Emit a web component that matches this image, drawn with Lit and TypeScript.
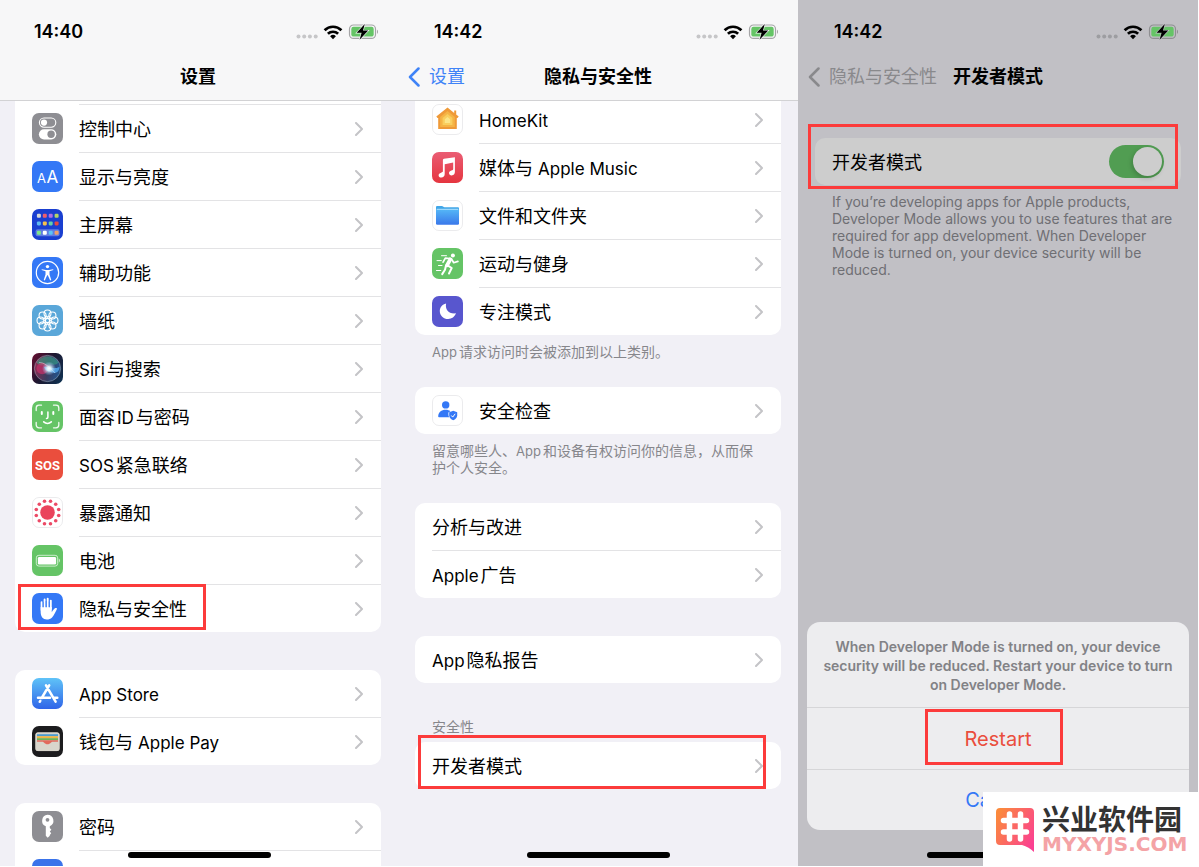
import { LitElement, html, svg, css, nothing, TemplateResult } from "lit";
import { customElement, property } from "lit/decorators.js";

const ring = (n: number, radius: number, offset = 0) =>
  Array.from({ length: n }, (_, i) => {
    const a = ((i + offset) / n) * Math.PI * 2;
    return [15.5 + Math.cos(a) * radius, 15.5 + Math.sin(a) * radius];
  });

const homeDots = [
  ["#d5d8d8", "#ee5d6c", "#b06ee8", "#b4d667"],
  ["#5fb8f0", "#f5c04b", "#63d0a8", "#e5493f"],
  ["#7ee58b", "#ffffff", "#5cc4f5", "#f2a06a"],
];

const tile = (fill: string) => svg`<rect width="31" height="31" rx="7" fill=${fill}/>`;
const whiteTile = svg`<rect x=".5" y=".5" width="30" height="30" rx="6.5" fill="#fff" stroke="#e6e6e8" stroke-width=".8"/>`;

const icons: Record<string, TemplateResult> = {
  control: svg`${tile("#8e8e93")}
    <rect x="7.4" y="5" width="16.4" height="9.2" rx="4.6" fill="none" stroke="#fff" stroke-width="1.1"/>
    <circle cx="12" cy="9.6" r="3.1" fill="#fff"/>
    <rect x="6.9" y="16.2" width="17.4" height="10.2" rx="5.1" fill="#fff"/>
    <circle cx="19.1" cy="21.3" r="3.7" fill="#8e8e93"/>`,
  display: svg`${tile("#3478f6")}
    <text x="5" y="22" font-size="13" fill="#fff">A</text>
    <text x="14.6" y="22" font-size="17" fill="#fff">A</text>`,
  home: svg`${tile("#1a3fd0")}
    <rect x="3.6" y="20.3" width="24" height="7" rx="2" fill="#8fa6ee" opacity=".6"/>
    ${homeDots.map((row, r) => row.map((c, i) =>
      svg`<rect x=${4.9 + i * 5.9} y=${[4.8, 12.4, 21.8][r]} width="4" height="4" rx="1.1" fill=${c}/>`))}`,
  access: svg`${tile("#3478f6")}
    <circle cx="15.5" cy="15.5" r="11.2" fill="none" stroke="#fff" stroke-width="1.2"/>
    <circle cx="15.5" cy="9.6" r="1.7" fill="#fff"/>
    <path d="M9.8 12.2l4.2.8h3l4.2-.8.2.9-3.9 1.2v3.2l1.8 5.5-1.1.4-2.4-5.2h-.6l-2.4 5.2-1.1-.4 1.8-5.5v-3.2l-3.9-1.2z" fill="#fff"/>`,
  wallpaper: svg`${tile("#5aa7d9")}
    <g fill="none" stroke="#fff" stroke-width="1.1">
      ${ring(8, 7).map(([x, y]) => svg`<circle cx=${x} cy=${y} r="3.5"/>`)}
      ${ring(8, 3.5, 0.5).map(([x, y]) => svg`<circle cx=${x} cy=${y} r="1.3" stroke-width=".7"/>`)}
      <circle cx="15.5" cy="15.5" r="2.1"/></g>`,
  siri: svg`<defs>
      <linearGradient id="s1" x1="0" y1=".2" x2="1" y2=".8"><stop offset="0" stop-color="#5d1030"/><stop offset=".45" stop-color="#1d1730"/><stop offset="1" stop-color="#10304f"/></linearGradient>
      <linearGradient id="s2" x1="0" y1=".4" x2="1" y2=".5"><stop offset="0" stop-color="#e0487b"/><stop offset=".5" stop-color="#5b5c86"/><stop offset="1" stop-color="#2f83d8"/></linearGradient>
      <radialGradient id="s3"><stop offset="0" stop-color="#fff"/><stop offset=".3" stop-color="#eff" stop-opacity=".85"/><stop offset="1" stop-color="#9cf" stop-opacity="0"/></radialGradient></defs>
    ${tile("url(#s1)")}
    <circle cx="15.5" cy="15.5" r="13" fill="url(#s2)" opacity=".5"/>
    <path d="M4.5 9.5a12.8 12.8 0 0 1 22 0c-3 4-7 1-11 2s-8 2-11-2z" fill="#36a184" opacity=".6"/>
    <circle cx="15.5" cy="15.5" r="13.1" fill="none" stroke="#a8b8c8" stroke-width=".7" opacity=".7"/>
    <circle cx="10.300" cy="15.500" r="5.800" fill="#d8306a" opacity=".6"/>
    <path d="M12 14c5-1 8 3 15.500 0 0 5-4 7-7.500 5.500S14 19 12 14z" fill="#52aaf0" opacity=".8"/>
    <path d="M7 9.500c5 0 9 3 16 10.500" stroke="#fff" stroke-width="1" opacity=".4" fill="none"/>
    <ellipse cx="17" cy="15.500" rx="7" ry="7" fill="url(#s3)"/>`,
  face: svg`${tile("#65c466")}
    <g fill="none" stroke="#fff" stroke-linecap="round">
      <path d="M4.200 9.500V7a2.800 2.800 0 0 1 2.800-2.800h2.500M21.500 4.200H24A2.800 2.800 0 0 1 26.800 7v2.500M26.800 21.500V24a2.800 2.800 0 0 1-2.800 2.800h-2.500M9.500 26.800H7A2.800 2.800 0 0 1 4.200 24v-2.500" stroke-width="1.300" opacity=".9"/>
      <path d="M9.800 11v2M21.300 11v2" stroke-width="2"/>
      <path d="M15.900 11v5.200c0 .8-.4 1.200-1.400 1.200" stroke-width="1.500"/>
      <path d="M11.700 20.900c2.200 2 5.400 2 7.600 0" stroke-width="1.600"/></g>`,
  sos: svg`${tile("#ea4e3d")}
    <text x="15.500" y="20.500" font-size="13" font-weight="700" text-anchor="middle" fill="#fff" class="cond">SOS</text>`,
  exposure: svg`${whiteTile}
    <circle cx="15.500" cy="15.500" r="7.300" fill="#ea435c"/>
    ${ring(12, 11.600, 0.5).map(([x, y]) => svg`<circle cx=${x} cy=${y} r="1.800" fill="#ec4a66"/>`)}`,
  battery: svg`${tile("#65c466")}
    <rect x="4.300" y="10.300" width="21.400" height="10.800" rx="2.600" fill="none" stroke="#d8f2d8" stroke-width=".9"/>
    <rect x="5.900" y="11.900" width="18.200" height="7.600" rx="1.300" fill="#fff"/>
    <path d="M26.800 13.600c1.400.7 1.400 3.500 0 4.200z" fill="#d8f2d8"/>`,
  hand: svg`${tile("#3478f6")}
    <g fill="none" stroke="#fff" stroke-linecap="round" stroke-width="1.900">
      <path d="M9.600 17V9.200M12.600 15V6.400M15.700 15V5.600M18.800 16V7.600"/></g>
    <path d="M8.650 14h11.100v5.200c1.200-1.700 2.200-3.200 3.500-4.100.8-.5 2 0 1.700.9-1.400 3.200-3 6.300-4.900 8.500-1.500 1.600-3.200 2-5.200 2-4 0-6.200-3-6.200-7.500z" fill="#fff"/>
    <path d="M11.100 9v5.500M14.150 8v6.500M17.250 8.500v6" stroke="#3478f6" stroke-width=".7"/>`,
  appstore: svg`<defs><linearGradient id="a1" x2="0" y2="1"><stop stop-color="#5fc3f8"/><stop offset="1" stop-color="#3065e8"/></linearGradient></defs>
    ${tile("url(#a1)")}
    <g stroke="#fff" stroke-width="2.500" stroke-linecap="round" fill="none">
      <path d="M17.200 7.300L9.700 20M14 7.300l9.600 16.300M6 19.700h12M22.500 19.700h2.800M8.300 22.800l-.6 1"/></g>`,
  wallet: svg`${tile("#1c1c1e")}
    <rect x="3.500" y="6.500" width="24" height="18.500" rx="2" fill="#d9d6cc"/>
    <path d="M5 8.200h21v2H5z" fill="#4a9bd0"/><path d="M5 10.200h21v2H5z" fill="#f0b440"/>
    <path d="M5 12.200h21v2H5z" fill="#6bb458"/><path d="M5 14.200h21v1.600h-5.500c-1.500 0-2 2.500-5 2.500s-3.500-2.500-5-2.500H5z" fill="#e2695c"/>
    <rect x="3.900" y="6.900" width="23.200" height="17.700" rx="2" fill="none" stroke="#d9d6cc" stroke-width=".9"/>`,
  key: svg`${tile("#8e8e93")}
    <path fill-rule="evenodd" d="M15.500 3.800a6 6 0 0 1 2.300 11.500v1.700l1.600 1.700-1.600 1.800 1.400 1.800-1.400 1.600v.9l-2.100 2-1.900-2v-9.500A6 6 0 0 1 15.500 3.800zm0 3.100a1.900 1.900 0 1 0 0 3.800 1.900 1.900 0 0 0 0-3.800z" fill="#fff"/>`,
  blue: tile("#3a73ea"),
  homekit: svg`${whiteTile}
    <path d="M15.500 3.500L4.300 12.600l1.200 1.300h.7V25h18.600V13.900h.7l1.200-1.300-2.500-2.100V6.500h-2v2.400z" fill="#ef9a38"/>
    <path d="M15.500 7L8.200 13v10h14.600V13z" fill="#f5b445"/>
    <path d="M15.500 10L10.600 14v7h9.800v-7z" fill="#f9ce5e"/>
    <path d="M15.500 13l-2.700 2.200V19h5.400v-3.800z" fill="#fce588"/>`,
  music: svg`<defs><linearGradient id="m1" x2="0" y2="1"><stop stop-color="#ea5d74"/><stop offset="1" stop-color="#e5353f"/></linearGradient></defs>
    ${tile("url(#m1)")}
    <path d="M22.900 5.200v14.900c0 2-1.300 3.300-3.200 3.300-1.600 0-2.700-.9-2.700-2.300 0-1.300.9-2.200 2.400-2.600 1.300-.3 1.800-.5 1.800-1.500v-6.500l-8.500 1.800v9.700c0 2.200-1.300 3.600-3.400 3.600-1.600 0-2.700-.9-2.700-2.300 0-1.300.9-2.200 2.500-2.600 1.200-.3 1.800-.6 1.800-1.600V8c0-.7.3-1.100 1-1.200z" fill="#fff"/>`,
  files: svg`<defs><linearGradient id="f1" x2="0" y2="1"><stop stop-color="#55b8f7"/><stop offset="1" stop-color="#3a78ea"/></linearGradient></defs>
    ${whiteTile}
    <path d="M4 7.300c0-.8.5-1.300 1.300-1.300h4.500c1.200 0 1.500 1.200 2.700 1.200h13.200c.8 0 1.300.5 1.300 1.300v3H4z" fill="#41a6e8"/>
    <rect x="4" y="9" width="23" height="15.700" rx="1.300" fill="url(#f1)"/><path d="M4.800 9.300h21.400" stroke="#c9ecff" stroke-width=".8"/>`,
  fitness: svg`${tile("#65c466")}
    <g stroke="#fff" fill="none" stroke-linecap="round" stroke-linejoin="round">
      <circle cx="20.900" cy="7.500" r="2" fill="#fff" stroke="none"/>
      <path d="M18.300 11.300l-3.300 6" stroke-width="3.800"/>
      <path d="M17.800 10.500l-4.500-.3-2.200 4M19.500 11l2.200 3.700 4.200-1.300" stroke-width="1.700"/>
      <path d="M15.500 17.300l4.200 2.700-2.700 5.500M14 17.500l-1 4.300-2.800 4.300" stroke-width="2"/>
      <path d="M9.500 7.700h5M5 12.600h4.300M6.500 17.500h3.500M4.500 22.500h4.300" stroke-width="1"/></g>`,
  focus: svg`${tile("#5856ce")}
    <path d="M14.100 7.400c-1.200 5.500 2.300 10.800 9.800 9.900-1.100 3.500-4.100 5.700-7.700 5.700-4.700 0-8.400-3.600-8.400-8.100 0-3.600 2.500-6.700 6.300-7.500z" fill="#fff"/>`,
  safety: svg`${whiteTile}
    <circle cx="13.700" cy="9.900" r="3.700" fill="#3478f6"/>
    <path d="M6.200 21.500c0-4 3.200-6.700 7.500-6.700 2 0 3.500.5 4.700 1.500l-2 1.300c0 2.300 0 3.200.8 4.700H7c-.5 0-.8-.3-.8-.8z" fill="#3478f6"/>
    <path d="M21.200 15.800l4 1.500v3c0 2.500-1.700 4-4 5-2.300-1-4-2.500-4-5v-3z" fill="#3478f6"/>
    <path d="M19.300 20.500l1.400 1.600 2.500-3.300" fill="none" stroke="#fff" stroke-width="1"/>`,
};

const icon = (name: string) =>
  html`<svg class="icon" viewBox="0 0 31 31" aria-hidden="true">${icons[name]}</svg>`;

/* Latin runs are set one step smaller than the Han characters around them, with a thin gap where they touch. */
const mixed = (text: string) =>
  text.split(/([A-Za-z][A-Za-z ]*[A-Za-z])/).filter(Boolean).map((part, i, all) => {
    if (!/^[A-Za-z]/.test(part)) return html`<span>${part}</span>`;
    const before = i > 0 && !/[ 、]$/.test(all[i - 1]);
    const after = i < all.length - 1;
    return html`<span class="latin ${before ? "before" : ""} ${after ? "after" : ""}">${part}</span>`;
  });

const chevron = html`<svg class="chevron" viewBox="0 0 8 14" aria-hidden="true">
  <path d="M1 1l6 6-6 6" fill="none" stroke="#c4c4c7" stroke-width="2" stroke-linecap="round" stroke-linejoin="round"/></svg>`;

const shared = css`
  * { box-sizing: border-box; }
  .latin { font-size: 17px; line-height: 1; }
  .latin.before { margin-left: 2px; }
  .latin.after { margin-right: 2px; }
  .card { background: #fff; border-radius: 10px; }
  .card.continued { border-radius: 0 0 10px 10px; }
  .row {
    position: relative; display: flex; align-items: center; height: 47px;
    padding: 0 18px 0 17px; color: #000; text-decoration: none; font-size: 18px; line-height: 24px; white-space: nowrap;
  }
  .label { flex: 1; padding-top: 2px; }
  .icon { width: 31px; height: 31px; margin-right: 16px; flex: none; }
  .icon text { font-family: Inter, "Liberation Sans", sans-serif; }
  .icon .cond { font-family: Roboto, "Liberation Sans", sans-serif; }
  .chevron { width: 8px; height: 14px; flex: none; }
  .divider { height: 1px; margin-left: 17px; background: #e3e3e5; }
  .divider.inset { margin-left: 64px; }
  .note { margin: 8px 0 27px; padding: 0 17px; font-size: 14px; line-height: 17px; color: #86868b; }
  .note .latin { font-size: 13px; }
  .mark { position: absolute; border: 3px solid #fc3b3b; pointer-events: none; }
`;

@customElement("phone-screen")
class PhoneScreen extends LitElement {
  @property() time = "";
  @property() heading = "";
  @property() back = "";
  @property({ type: Boolean, reflect: true }) dimmed = false;

  static styles = css`
    * { box-sizing: border-box; }
    :host {
      position: relative; display: flex; flex-direction: column; min-width: 0; min-height: 0;
      overflow: hidden; background: #f1f0f6;
    }
    :host([dimmed]) { background: #c1c0c5; }
    .head { flex: none; background: #f7f7f8; border-bottom: 1px solid #d2d2d4; }
    :host([dimmed]) .head { background: none; border-color: transparent; }
    .status {
      display: flex; align-items: center; height: 54px; padding: 10px 20px 0 36px;
      font-size: 18px; font-weight: 600; line-height: 24px;
    }
    .status svg { width: 84px; height: 18px; margin-left: auto; }
    .nav {
      display: grid; grid-template-columns: 1fr auto 1fr; align-items: center; height: 46px;
      font-size: 18px; line-height: 24px; white-space: nowrap;
    }
    h1 { margin: 0; grid-column: 2; font-size: 18px; font-weight: 700; }
    .back {
      justify-self: start; display: flex; align-items: center; gap: 9px; padding-left: 10px;
      color: #3f83f7; text-decoration: none;
    }
    .back svg { width: 12px; height: 20px; }
    :host([dimmed]) .back { color: #89898c; }
    .body { flex: 1; min-height: 0; overflow: hidden; padding: 0 17px; }
    .bar {
      position: absolute; bottom: 8px; left: 50%; width: 143px; height: 6px; margin-left: -71px;
      border-radius: 3px; background: #000; z-index: 1;
    }
    :host(.first) .body { padding-left: 15px; }
    :host(.first) .status { padding-left: 34px; }
    :host(.first) .nav { padding-right: 2px; }
  `;

  render() {
    const outline = this.dimmed ? "#8f8f92" : "#a5a5a7";
    const gap = this.dimmed ? "#c1c0c5" : "#f7f7f8";
    return html`
      <header class="head">
        <div class="status">
          <time>${this.time}</time>
          <svg viewBox="0 0 84 18" aria-hidden="true">
            <g fill=${this.dimmed ? "#9d9da1" : "#c6c6c8"}>
              <circle cx="4.500" cy="13.500" r="2"/><circle cx="10.200" cy="13.500" r="2"/><circle cx="15.900" cy="13.500" r="2"/><circle cx="21.700" cy="13.500" r="2"/></g>
            <g fill="none" stroke="#000" stroke-width="2.700">
              <path d="M30.600 7.200a12 12 0 0 1 16.800 0"/><path d="M33.900 10.800a7.400 7.400 0 0 1 10.200 0"/></g>
            <path d="M39 16.200l-2.900-3a4.200 4.200 0 0 1 5.800 0z"/>
            <rect x="55.500" y="2" width="26" height="13.400" rx="4" fill="none" stroke=${outline} stroke-width="1.200"/>
            <rect x="57.300" y="3.800" width="22.400" height="9.800" rx="2.200" fill="#65c466"/>
            <path d="M83 6.700c1.300.6 1.300 3.400 0 4z" fill=${outline}/>
            <path d="M70.800 1l-8.200 8.800h5l-2 6.900 8.600-9.200h-5.200z" fill="#000" stroke=${gap} stroke-width="1.200" paint-order="stroke"/>
          </svg>
        </div>
        <div class="nav">
          ${this.back ? html`<a class="back" href="#">
            <svg viewBox="0 0 12 20" aria-hidden="true"><path d="M10.500 1.500L2 10l8.500 8.500" fill="none" stroke="currentColor" stroke-width="2.500" stroke-linecap="round" stroke-linejoin="round"/></svg>
            ${this.back}</a>` : nothing}
          <h1>${this.heading}</h1>
        </div>
      </header>
      <main class="body"><slot></slot></main>
      <div class="bar"></div>
      <slot name="overlay"></slot>
    `;
  }
}

interface Item { label: string; icon?: string; mark?: string; }

@customElement("settings-group")
class SettingsGroup extends LitElement {
  @property({ attribute: false }) items: Item[] = [];
  @property({ type: Boolean }) continued = false;

  static styles = [shared, css`
    :host { display: block; }
    .mark.privacy { left: 3px; top: -1px; width: 188px; height: 46px; }
    .mark.developer { left: 3px; right: 15px; top: -7px; height: 54px; }
  `];

  render() {
    return html`<div class="card ${this.continued ? "continued" : ""}">
      ${this.items.map((it, i) => html`
        ${i ? html`<div class="divider ${it.icon ? "inset" : ""}"></div>` : nothing}
        <a class="row" href="#">
          ${it.icon ? icon(it.icon) : nothing}
          <span class="label">${mixed(it.label)}</span>
          ${chevron}
          ${it.mark ? html`<span class="mark ${it.mark}"></span>` : nothing}
        </a>`)}
    </div>`;
  }
}

const general: Item[] = [
  { label: "控制中心", icon: "control" },
  { label: "显示与亮度", icon: "display" },
  { label: "主屏幕", icon: "home" },
  { label: "辅助功能", icon: "access" },
  { label: "墙纸", icon: "wallpaper" },
  { label: "Siri与搜索", icon: "siri" },
  { label: "面容ID与密码", icon: "face" },
  { label: "SOS紧急联络", icon: "sos" },
  { label: "暴露通知", icon: "exposure" },
  { label: "电池", icon: "battery" },
  { label: "隐私与安全性", icon: "hand", mark: "privacy" },
];
const store: Item[] = [
  { label: "App Store", icon: "appstore" },
  { label: "钱包与 Apple Pay", icon: "wallet" },
];
const accounts: Item[] = [
  { label: "密码", icon: "key" },
  { label: "", icon: "blue" },
];
const privacy: Item[] = [
  { label: "HomeKit", icon: "homekit" },
  { label: "媒体与 Apple Music", icon: "music" },
  { label: "文件和文件夹", icon: "files" },
  { label: "运动与健身", icon: "fitness" },
  { label: "专注模式", icon: "focus" },
];

@customElement("app-root")
class AppRoot extends LitElement {
  static styles = [shared, css`
    :host {
      display: grid; grid-template-columns: 398fr 400fr 400fr; grid-template-rows: minmax(0, 1fr);
      position: relative; height: 100vh; box-sizing: border-box; padding: 0 1px 1px 0; overflow: hidden;
      background: #fff; font-family: Inter, "Noto Sans CJK SC", sans-serif;
    }
    .stub { height: 3px; background: #fff; }
    .seam { background: #fff; }
    .stack { display: flex; flex-direction: column; gap: 38px; }
    .scrolled { margin-top: -5px; }
    .pair { margin-bottom: 38px; }
    .caption { margin: 35px 0 7px; padding: 0 17px; font-size: 14px; line-height: 17px; font-weight: 400; color: #86868b; }
    .switch-card { margin-top: 37px; background: #cdcdcd; position: relative; }
    .switch-card .row { padding-right: 17px; }
    .switch {
      appearance: none; margin: 0; width: 55px; height: 33px; border-radius: 17px; background: #519d52;
      display: flex; align-items: center; justify-content: flex-end; padding: 2px;
    }
    .switch::before { content: ""; width: 29px; height: 29px; border-radius: 50%; background: #cdcdcd; box-shadow: -1px 2px 5px rgba(0, 0, 0, .2); }
    .dim-note { padding-right: 8px; color: #6f6f74; }
    .mark.switcher { left: -7px; right: 3px; top: -14px; height: 65px; }
    .sheet {
      position: absolute; left: 9px; right: 9px; bottom: 36px; border-radius: 13px; background: #ededef;
      text-align: center; z-index: 2;
    }
    .sheet p { margin: 0; padding: 15px 14px 13px; font-size: 14px; line-height: 19px; font-weight: 600; color: #828286; }
    .action {
      position: relative; display: block; width: 100%; height: 61px; border: 0; border-top: 1px solid #d6d6d8; background: none;
      font-family: inherit; font-size: 20px; color: #3478f6; padding: 0;
    }
    .action.danger { height: 62px; color: #ea4e3d; }
    .mark.restart { left: 118px; right: 126px; top: 1px; height: 56px; }
    .brand {
      position: absolute; right: 0; bottom: 0; z-index: 3; display: flex; align-items: center; gap: 8px;
      width: 216px; height: 75px; padding: 0 0 0 13px; background: #fff;
    }
    .brand svg { width: 38px; height: 46px; flex: none; }
    .names { display: flex; flex-direction: column; }
    .cn { font-size: 28px; line-height: 28px; font-weight: 700; color: #333; white-space: nowrap; }
    .en { font-family: "DejaVu Sans", sans-serif; font-weight: 700; font-size: 20px; line-height: 20px; color: #f4a3a6; }
  `];

  render() {
    return html`
      <phone-screen class="first" time="14:40" heading="设置">
        <div class="seam"><div class="stub"></div><div class="divider inset"></div></div>
        <div class="stack">
          <settings-group continued .items=${general}></settings-group>
          <settings-group .items=${store}></settings-group>
          <settings-group .items=${accounts}></settings-group>
        </div>
      </phone-screen>

      <phone-screen time="14:42" heading="隐私与安全性" back="设置">
        <settings-group class="scrolled" continued .items=${privacy}></settings-group>
        <p class="note">${mixed("App请求访问时会被添加到以上类别。")}</p>
        <settings-group .items=${[{ label: "安全检查", icon: "safety" }]}></settings-group>
        <p class="note">${mixed("留意哪些人、App和设备有权访问你的信息，从而保护个人安全。")}</p>
        <settings-group class="pair" .items=${[{ label: "分析与改进" }, { label: "Apple广告" }]}></settings-group>
        <settings-group .items=${[{ label: "App隐私报告" }]}></settings-group>
        <h2 class="caption">安全性</h2>
        <settings-group .items=${[{ label: "开发者模式", mark: "developer" }]}></settings-group>
      </phone-screen>

      <phone-screen dimmed time="14:42" heading="开发者模式" back="隐私与安全性">
        <div class="card switch-card">
          <div class="row">
            <label class="label" for="dev">开发者模式</label>
            <input class="switch" id="dev" type="checkbox" role="switch" checked>
          </div>
          <span class="mark switcher"></span>
        </div>
        <p class="note dim-note">If you’re developing apps for Apple products, Developer Mode allows you to use features that are required for app development. When Developer Mode is turned on, your device security will be reduced.</p>
        <div class="sheet" slot="overlay" role="dialog" aria-label="Restart">
          <p>When Developer Mode is turned on, your device security will be reduced. Restart your device to turn on Developer Mode.</p>
          <button class="action danger">Restart<span class="mark restart"></span></button>
          <button class="action">Cancel</button>
        </div>
      </phone-screen>

      <div class="brand">
        <svg viewBox="0 0 38 46" aria-hidden="true">
          <defs><linearGradient id="g" x1="0" y1=".2" x2="1" y2=".8"><stop stop-color="#fb8a3c"/><stop offset="1" stop-color="#fb3f93"/></linearGradient></defs>
          <path d="M4 1h30q4 0 4 4v40q-5-5-12-7H4q-4 0-4-4V5q0-4 4-4z" fill="url(#g)"/>
          <path d="M13.500 7v25M24.500 7v25M7.500 13.500h23M7.500 25h23" stroke="#fff" stroke-width="5.500" stroke-linecap="round"/>
        </svg>
        <div class="names"><span class="cn">兴业软件园</span><span class="en">MYXYJS.COM</span></div>
      </div>
    `;
  }
}
